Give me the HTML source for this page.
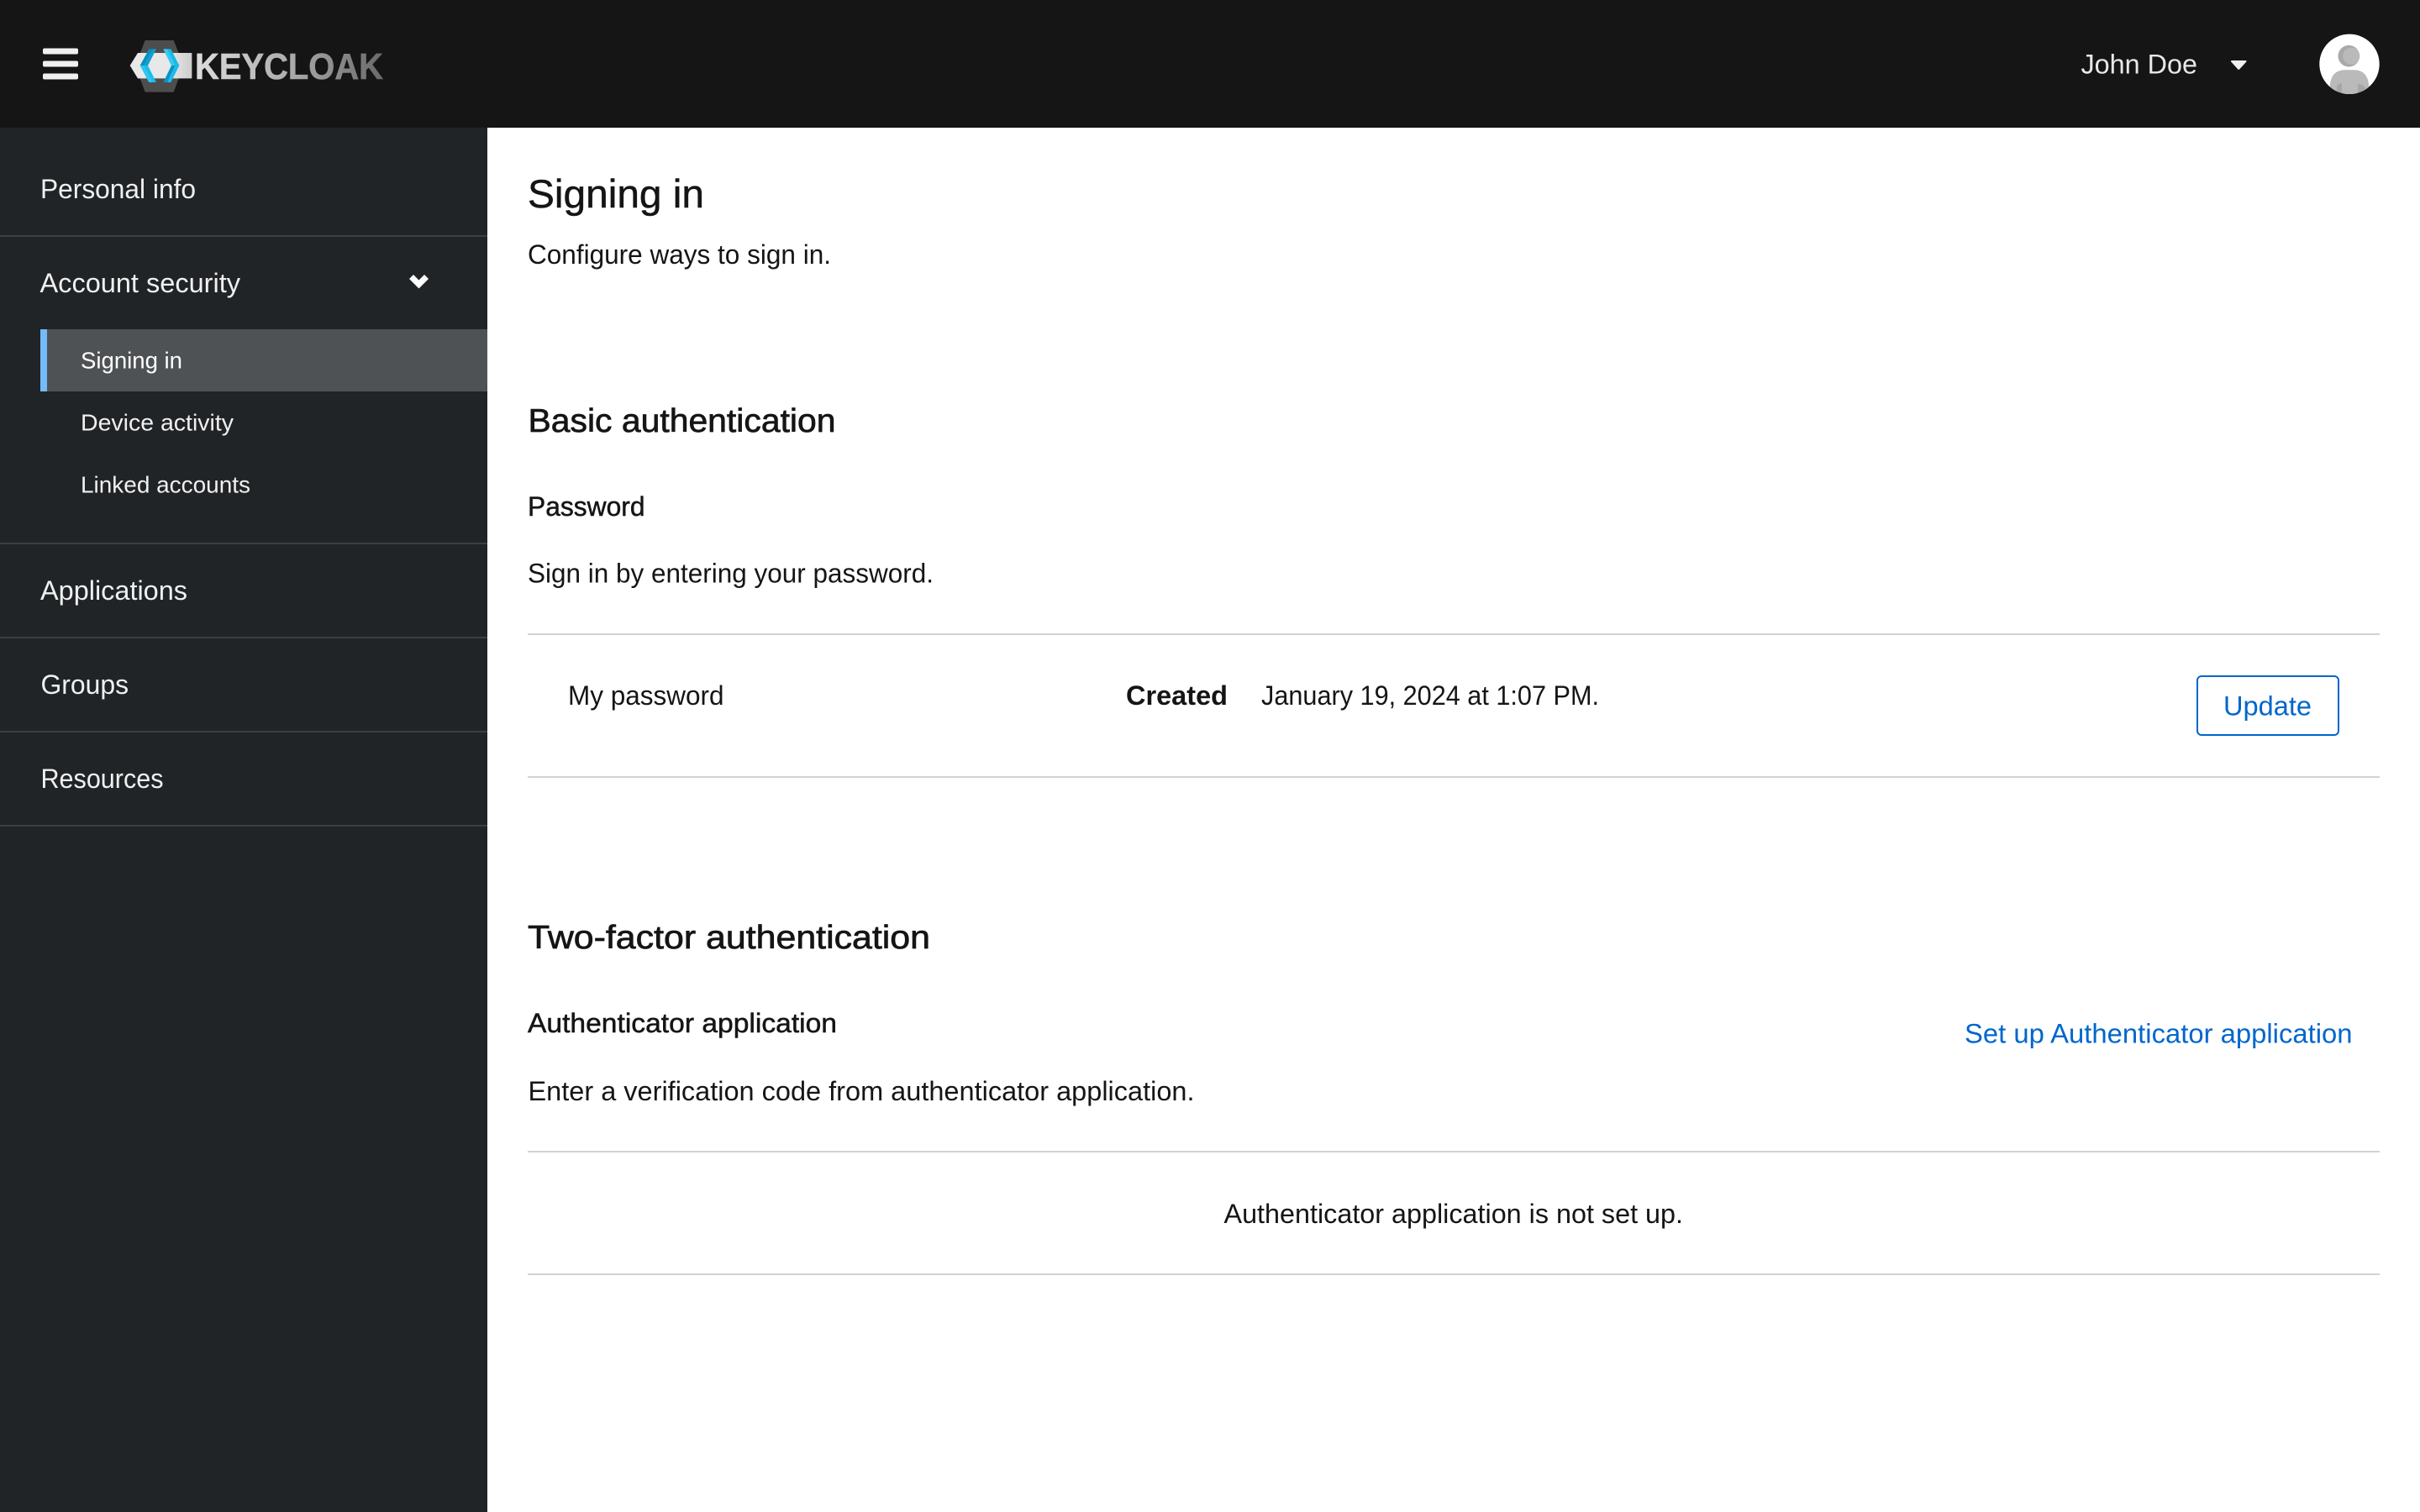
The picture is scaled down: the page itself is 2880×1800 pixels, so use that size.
<!DOCTYPE html>
<html lang="en">
<head>
<meta charset="utf-8">
<title>Keycloak Account Console - Signing in</title>
<style>
html,body{margin:0;padding:0;width:2880px;height:1800px;overflow:hidden;background:#fff}
svg{position:absolute;left:0;top:0;display:block}
text{font-family:"Liberation Sans",sans-serif;font-size:32px;fill:#151515}
.nav{fill:#f0f0f0}
.sub{font-size:28px;fill:#f0f0f0}
.med{stroke:#151515;stroke-width:.5px}
.link{fill:#0066cc}
</style>
</head>
<body>
<svg width="2880" height="1800" viewBox="0 0 2880 1800" xmlns="http://www.w3.org/2000/svg">
<defs>
<linearGradient id="kc" gradientUnits="userSpaceOnUse" x1="230" y1="0" x2="456" y2="0">
<stop offset="0" stop-color="#dedede"/><stop offset=".5" stop-color="#adadad"/><stop offset="1" stop-color="#696969"/>
</linearGradient>
<linearGradient id="band" gradientUnits="userSpaceOnUse" x1="154" y1="0" x2="228" y2="0">
<stop offset="0" stop-color="#e8e8e8"/><stop offset="1" stop-color="#cfcfcf"/>
</linearGradient>
<clipPath id="av"><circle cx="2796" cy="76.3" r="35.7"/></clipPath>
</defs>

<!-- header -->
<rect x="0" y="0" width="2880" height="152" fill="#151515"/>
<rect x="51" y="57.5" width="42" height="7" rx="2" fill="#f0f0f0"/>
<rect x="51" y="72.5" width="42" height="7" rx="2" fill="#f0f0f0"/>
<rect x="51" y="87.5" width="42" height="7" rx="2" fill="#f0f0f0"/>

<!-- logo -->
<g transform="translate(150 44) scale(.33333)">
<polygon points="68,12 170,12 205,102 170,197 68,197 33,102" fill="#4d4d4d"/>
<polygon points="14,102 42,57 235,57 235,148 42,148" fill="url(#band)" transform="translate(0 0)"/>
<polygon points="82,43 97,43 64,102 50,102" fill="#0a8fbf"/>
<polygon points="97,43 108,43 78,102 64,102" fill="#0e9fd0"/>
<polygon points="50,102 78,102 108,162 82,162" fill="#1bbcec"/>
<polygon points="50,102 64,102 96,162 82,162" fill="#2fc5ef"/>
<polygon points="133,43 160,43 190,102 162,102" fill="#1ab8e6"/>
<polygon points="133,43 147,43 176,102 162,102" fill="#38c9f0"/>
<polygon points="162,102 176,102 147,162 133,162" fill="#0b93c4"/>
<polygon points="176,102 190,102 160,162 147,162" fill="#1bbcec"/>
</g>
<text x="232" y="94" style="font-size:44px;font-weight:700;fill:url(#kc);stroke:url(#kc);stroke-width:.6px" textLength="224" lengthAdjust="spacingAndGlyphs">KEYCLOAK</text>

<!-- user -->
<text x="2476.5" y="87.5" style="fill:#e8e8e8" textLength="138.5" lengthAdjust="spacingAndGlyphs">John Doe</text>
<polygon points="2656,73 2672.5,73 2664.2,82" fill="#f0f0f0" stroke="#f0f0f0" stroke-width="2" stroke-linejoin="round"/>
<circle cx="2796" cy="76.3" r="35.7" fill="#ffffff"/>
<g clip-path="url(#av)">
<circle cx="2795.3" cy="66.7" r="12.8" fill="#a9a9a9"/>
<circle cx="2798.3" cy="66.7" r="10" fill="#bababa"/>
<path d="M2773 112 L2773 100 Q2775 84 2790 83.3 L2802 83.3 Q2817 84 2819 100 L2819 112 Z" fill="#bababa"/>
<path d="M2781 112 L2781 103 Q2783 99 2787 99 L2787 112 Z" fill="#a6a6a6"/>
<path d="M2806 112 L2806 100 Q2812 100 2815 105 L2815 112 Z" fill="#a6a6a6"/>
</g>

<!-- sidebar -->
<rect x="0" y="152" width="580" height="1648" fill="#212427"/>
<rect x="0" y="280" width="580" height="2" fill="#3c3f42"/>
<rect x="0" y="646" width="580" height="2" fill="#3c3f42"/>
<rect x="0" y="758" width="580" height="2" fill="#3c3f42"/>
<rect x="0" y="870" width="580" height="2" fill="#3c3f42"/>
<rect x="0" y="982" width="580" height="2" fill="#3c3f42"/>
<rect x="48" y="392" width="532" height="74" fill="#4f5255"/>
<rect x="48" y="392" width="8" height="74" fill="#73bcf7"/>

<text class="nav" x="48" y="236" textLength="185" lengthAdjust="spacingAndGlyphs">Personal info</text>
<text class="nav" x="47.5" y="348" textLength="238.5" lengthAdjust="spacingAndGlyphs">Account security</text>
<polyline points="489.5,329.5 498.5,338.5 507.5,329.5" fill="none" stroke="#fff" stroke-width="7" stroke-linejoin="miter"/>
<text class="sub" x="96" y="438.5" textLength="121" lengthAdjust="spacingAndGlyphs" style="fill:#fff">Signing in</text>
<text class="sub" x="96" y="512.5" textLength="182" lengthAdjust="spacingAndGlyphs">Device activity</text>
<text class="sub" x="96" y="586.5" textLength="202" lengthAdjust="spacingAndGlyphs">Linked accounts</text>
<text class="nav" x="48" y="714" textLength="175" lengthAdjust="spacingAndGlyphs">Applications</text>
<text class="nav" x="48.5" y="826" textLength="104.5" lengthAdjust="spacingAndGlyphs">Groups</text>
<text class="nav" x="48.5" y="938" textLength="146" lengthAdjust="spacingAndGlyphs">Resources</text>

<!-- main -->
<text class="med" x="628" y="247" style="font-size:47px" textLength="210" lengthAdjust="spacingAndGlyphs">Signing in</text>
<text x="628" y="314" textLength="361" lengthAdjust="spacingAndGlyphs">Configure ways to sign in.</text>

<text class="med" x="628.5" y="514" style="font-size:39px;stroke-width:.7px" textLength="366" lengthAdjust="spacingAndGlyphs">Basic authentication</text>
<text class="med" x="628" y="614" textLength="139.5" lengthAdjust="spacingAndGlyphs">Password</text>
<text x="628" y="693.5" textLength="483" lengthAdjust="spacingAndGlyphs">Sign in by entering your password.</text>
<rect x="628" y="754" width="2204" height="2" fill="#d2d2d2"/>
<text x="676" y="839" textLength="185.5" lengthAdjust="spacingAndGlyphs">My password</text>
<text x="1340" y="839" style="font-weight:700" textLength="121" lengthAdjust="spacingAndGlyphs">Created</text>
<text x="1501" y="839" textLength="402" lengthAdjust="spacingAndGlyphs">January 19, 2024 at 1:07 PM.</text>
<rect x="2615" y="805" width="168" height="70" rx="5" fill="#fff" stroke="#0066cc" stroke-width="2"/>
<text class="link" x="2646" y="851.5" textLength="105" lengthAdjust="spacingAndGlyphs">Update</text>
<rect x="628" y="924" width="2204" height="2" fill="#d2d2d2"/>

<text class="med" x="628" y="1129" style="font-size:39px;stroke-width:.7px" textLength="479" lengthAdjust="spacingAndGlyphs">Two-factor authentication</text>
<text class="med" x="628" y="1229" textLength="368" lengthAdjust="spacingAndGlyphs">Authenticator application</text>
<text class="link" x="2338" y="1241.5" textLength="461.5" lengthAdjust="spacingAndGlyphs">Set up Authenticator application</text>
<text x="628.5" y="1310" textLength="793" lengthAdjust="spacingAndGlyphs">Enter a verification code from authenticator application.</text>
<rect x="628" y="1370" width="2204" height="2" fill="#d2d2d2"/>
<text x="1456.5" y="1456" textLength="546.5" lengthAdjust="spacingAndGlyphs">Authenticator application is not set up.</text>
<rect x="628" y="1516" width="2204" height="2" fill="#d2d2d2"/>
</svg>
</body>
</html>
